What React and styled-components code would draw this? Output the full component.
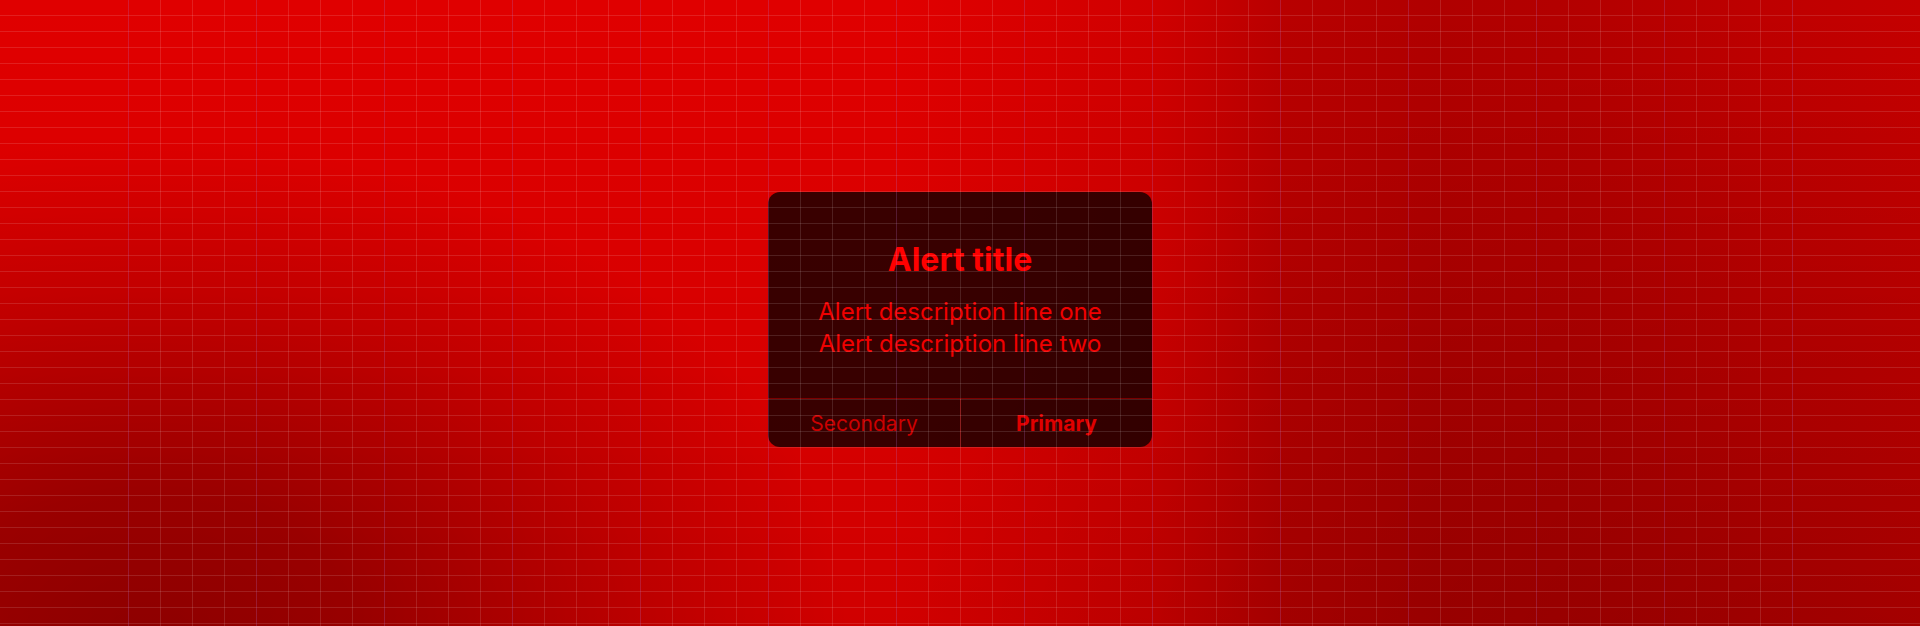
import styled, { createGlobalStyle } from "styled-components";

const GlobalStyle = createGlobalStyle`
  html, body, #root {
    margin: 0;
    height: 100%;
  }

  body {
    font-family: Inter, "Noto Sans", sans-serif;
    overflow: hidden;
  }
`;

const Page = styled.main`
  min-height: 100vh;
  box-sizing: border-box;
  display: flex;
  justify-content: center;
  align-items: flex-start;
  padding-top: 192px;
  background:
    radial-gradient(ellipse 700px 500px at 150px 640px, rgba(0, 0, 0, 0.32) 0%, rgba(0, 0, 0, 0.27) 30%, rgba(0, 0, 0, 0.1) 70%, rgba(0, 0, 0, 0) 100%),
    radial-gradient(ellipse 900px 650px at 1800px 700px, rgba(0, 0, 0, 0.12) 0%, rgba(0, 0, 0, 0) 100%),
    linear-gradient(to bottom, rgba(0, 0, 0, 0) 0%, rgba(0, 0, 0, 0.07) 100%),
    linear-gradient(90deg, #e00000 0%, #e00000 47%, #da0000 52%, #d00000 60%, #b80000 67%, #b00000 75%, #b40000 83%, #c00000 94%, #c40000 100%);
`;

/* design grid drawn over the whole page */
const GridOverlay = styled.div`
  position: fixed;
  inset: 0;
  pointer-events: none;
  z-index: 10;
  background-image: linear-gradient(to bottom, transparent 15px, rgba(255, 255, 255, 0.12) 15px);
  background-size: 100% 16px;
`;

const GridColumns = styled.div`
  margin-left: 128px;
  width: 1665px;
  height: 100%;
  background-image:
    linear-gradient(to right, rgba(120, 0, 160, 0.14) 1px, transparent 1px),
    linear-gradient(to right, rgba(255, 255, 255, 0.12) 1px, transparent 1px);
  background-size: 128px 100%, 32px 100%;
`;

const AlertCard = styled.section`
  width: 384px;
  height: 255px;
  border-radius: 12px;
  background: rgba(0, 0, 0, 0.74);
  display: flex;
  flex-direction: column;
  overflow: hidden;
`;

const AlertBody = styled.div`
  flex: 1;
  padding: 48px 24px 0;
  text-align: center;
`;

const AlertTitle = styled.h2`
  margin: 0 0 16px;
  font-size: 32px;
  line-height: 40px;
  font-weight: 700;
  color: #ff0000;
`;

const AlertText = styled.p`
  margin: 0;
  font-size: 24px;
  line-height: 32px;
  font-weight: 400;
  color: #f00000;
`;

const AlertActions = styled.div`
  display: grid;
  grid-template-columns: 1fr 1fr;
  height: 48px;
  border-top: 1px solid rgba(255, 0, 0, 0.35);
`;

const ActionButton = styled.button`
  appearance: none;
  border: none;
  border-left: ${(p) => (p.$primary ? "1px solid rgba(255, 0, 0, 0.35)" : "none")};
  background: transparent;
  font-family: inherit;
  font-size: 21px;
  font-weight: ${(p) => (p.$primary ? 700 : 400)};
  color: ${(p) => (p.$primary ? "#e00000" : "#cc0000")};
  padding: 0;
  cursor: pointer;
`;

export default function App() {
  return (
    <>
      <GlobalStyle />
      <Page>
        <AlertCard role="alertdialog">
          <AlertBody>
            <AlertTitle>Alert title</AlertTitle>
            <AlertText>
              Alert description line one
              <br />
              Alert description line two
            </AlertText>
          </AlertBody>
          <AlertActions>
            <ActionButton>Secondary</ActionButton>
            <ActionButton $primary>Primary</ActionButton>
          </AlertActions>
        </AlertCard>
      </Page>
      <GridOverlay>
        <GridColumns />
      </GridOverlay>
    </>
  );
}
